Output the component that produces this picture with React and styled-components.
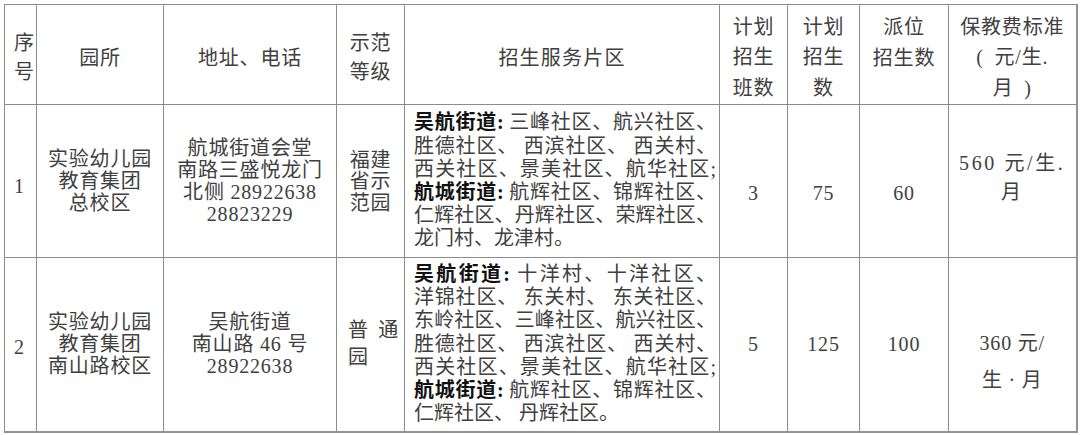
import React from "react";
import styled, { createGlobalStyle } from "styled-components";

const GlobalStyle = createGlobalStyle`
  html, body {
    margin: 0;
    padding: 0;
    background: #fff;
  }
  body {
    font-family: "Liberation Serif", "Noto Sans CJK SC", serif;
    color: #404040;
  }
`;

const Page = styled.div`
  padding: 4px 4px 0 4px;
`;

const Table = styled.table`
  width: 1072px;
  table-layout: fixed;
  border-collapse: collapse;
  border-top: 1px solid #8c8c8c;
  border-left: 1px solid #8c8c8c;
  border-right: 2px solid #939393;
  border-bottom: 2px solid #939393;
  box-shadow: 0 2px 0 #ececec;
  font-size: 20px;
  letter-spacing: 0.8px;
`;

const Row = styled.tr`
  height: ${(p) => p.$h}px;
`;

const Cell = styled.td`
  border: 1px solid #8c8c8c;
  padding: ${(p) => p.$pad || "0"};
  text-align: ${(p) => p.$align || "center"};
  vertical-align: ${(p) => p.$valign || "middle"};
  line-height: ${(p) => p.$lh || 22}px;
  letter-spacing: ${(p) => p.$ls || "0.8px"};
  font-weight: normal;
  overflow: visible;
`;

const ZoneCell = styled(Cell)`
  padding: 0 3px 0 9px;
  text-align: left;
  letter-spacing: 0;
  line-height: 23.2px;
`;

const ZoneLine = styled.span`
  display: block;
  text-align: ${(p) => (p.$last ? "left" : "justify")};
  text-align-last: ${(p) => (p.$last ? "left" : "justify")};
`;

const Street = styled.b`
  font-weight: 700;
  color: #111;
`;

const Justified = styled.div`
  text-align: justify;
`;

const columns = [32, 127, 173, 68, 315, 68, 72, 89, 128];

const zone1 = [
  [<Street key="s">吴航街道:</Street>, " 三峰社区、航兴社区、"],
  ["胜德社区、 西滨社区、 西关村、"],
  ["西关社区、景美社区、航华社区;"],
  [<Street key="s">航城街道:</Street>, " 航辉社区、锦辉社区、"],
  ["仁辉社区、丹辉社区、荣辉社区、"],
  ["龙门村、龙津村。"],
];

const zone2 = [
  [<Street key="s">吴航街道:</Street>, "  十洋村、十洋社区、"],
  ["洋锦社区、 东关村、 东关社区、"],
  ["东岭社区、三峰社区、航兴社区、"],
  ["胜德社区、 西滨社区、 西关村、"],
  ["西关社区、景美社区、航华社区;"],
  [<Street key="s">航城街道:</Street>, " 航辉社区、锦辉社区、"],
  ["仁辉社区、 丹辉社区。"],
];

const Zone = ({ lines }) => (
  <ZoneCell>
    {lines.map((parts, i) => (
      <ZoneLine key={i} $last={i === lines.length - 1}>
        {parts}
      </ZoneLine>
    ))}
  </ZoneCell>
);

const App = () => {
  return (
    <Page>
      <GlobalStyle />
      <Table>
        <colgroup>
          {columns.map((w, i) => (
            <col key={i} style={{ width: w }} />
          ))}
        </colgroup>
        <thead>
          <Row $h={100}>
            <Cell as="th" $align="left" $pad="6px 0 0 9px" $lh={29}>
              序<br />号
            </Cell>
            <Cell as="th" $pad="7px 0 0 0">园所</Cell>
            <Cell as="th" $pad="7px 0 0 0">地址、电话</Cell>
            <Cell as="th" $pad="6px 0 0 0" $lh={29}>
              示范<br />等级
            </Cell>
            <Cell as="th" $pad="7px 0 0 0" $ls="1.2px">
              招生服务片区
            </Cell>
            <Cell as="th" $pad="6px 0 0 0" $lh={30.5}>
              计划<br />招生<br />班数
            </Cell>
            <Cell as="th" $pad="6px 0 0 0" $lh={30.5}>
              计划<br />招生<br />数
            </Cell>
            <Cell as="th" $valign="top" $pad="7px 0 0 0" $lh={30.5}>
              派位<br />招生数
            </Cell>
            <Cell as="th" $pad="6px 0 0 0" $lh={30.5}>
              保教费标准<br />(&#8194;元/生.<br />月&#8194;)
            </Cell>
          </Row>
        </thead>
        <tbody>
          <Row $h={153}>
            <Cell $align="left" $pad="10px 0 0 9px">1</Cell>
            <Cell>
              实验幼儿园<br />教育集团<br />总校区
            </Cell>
            <Cell>
              航城街道会堂<br />南路三盛悦龙门<br />北侧 28922638<br />28823229
            </Cell>
            <Cell $lh={21.5} $pad="2px 0 0 0">
              福建<br />省示<br />范园
            </Cell>
            <Zone lines={zone1} />
            <Cell $pad="24px 0 0 0">3</Cell>
            <Cell $pad="24px 0 0 0">75</Cell>
            <Cell $pad="24px 0 0 0">60</Cell>
            <Cell $lh={29} $pad="0 0 6px 0" $ls="2.6px">
              560 元/生.<br />月
            </Cell>
          </Row>
          <Row $h={174}>
            <Cell $align="left" $pad="6px 0 0 9px">2</Cell>
            <Cell>
              实验幼儿园<br />教育集团<br />南山路校区
            </Cell>
            <Cell>
              吴航街道<br />南山路 46 号<br />28922638
            </Cell>
            <Cell $align="left" $pad="0 5px 0 11px" $lh={27}>
              <Justified>普 通 园</Justified>
            </Cell>
            <Zone lines={zone2} />
            <Cell>5</Cell>
            <Cell>125</Cell>
            <Cell>100</Cell>
            <Cell $lh={37} $pad="35px 0 0 0">
              360 元/<br />生 · 月
            </Cell>
          </Row>
        </tbody>
      </Table>
    </Page>
  );
};

export default App;
